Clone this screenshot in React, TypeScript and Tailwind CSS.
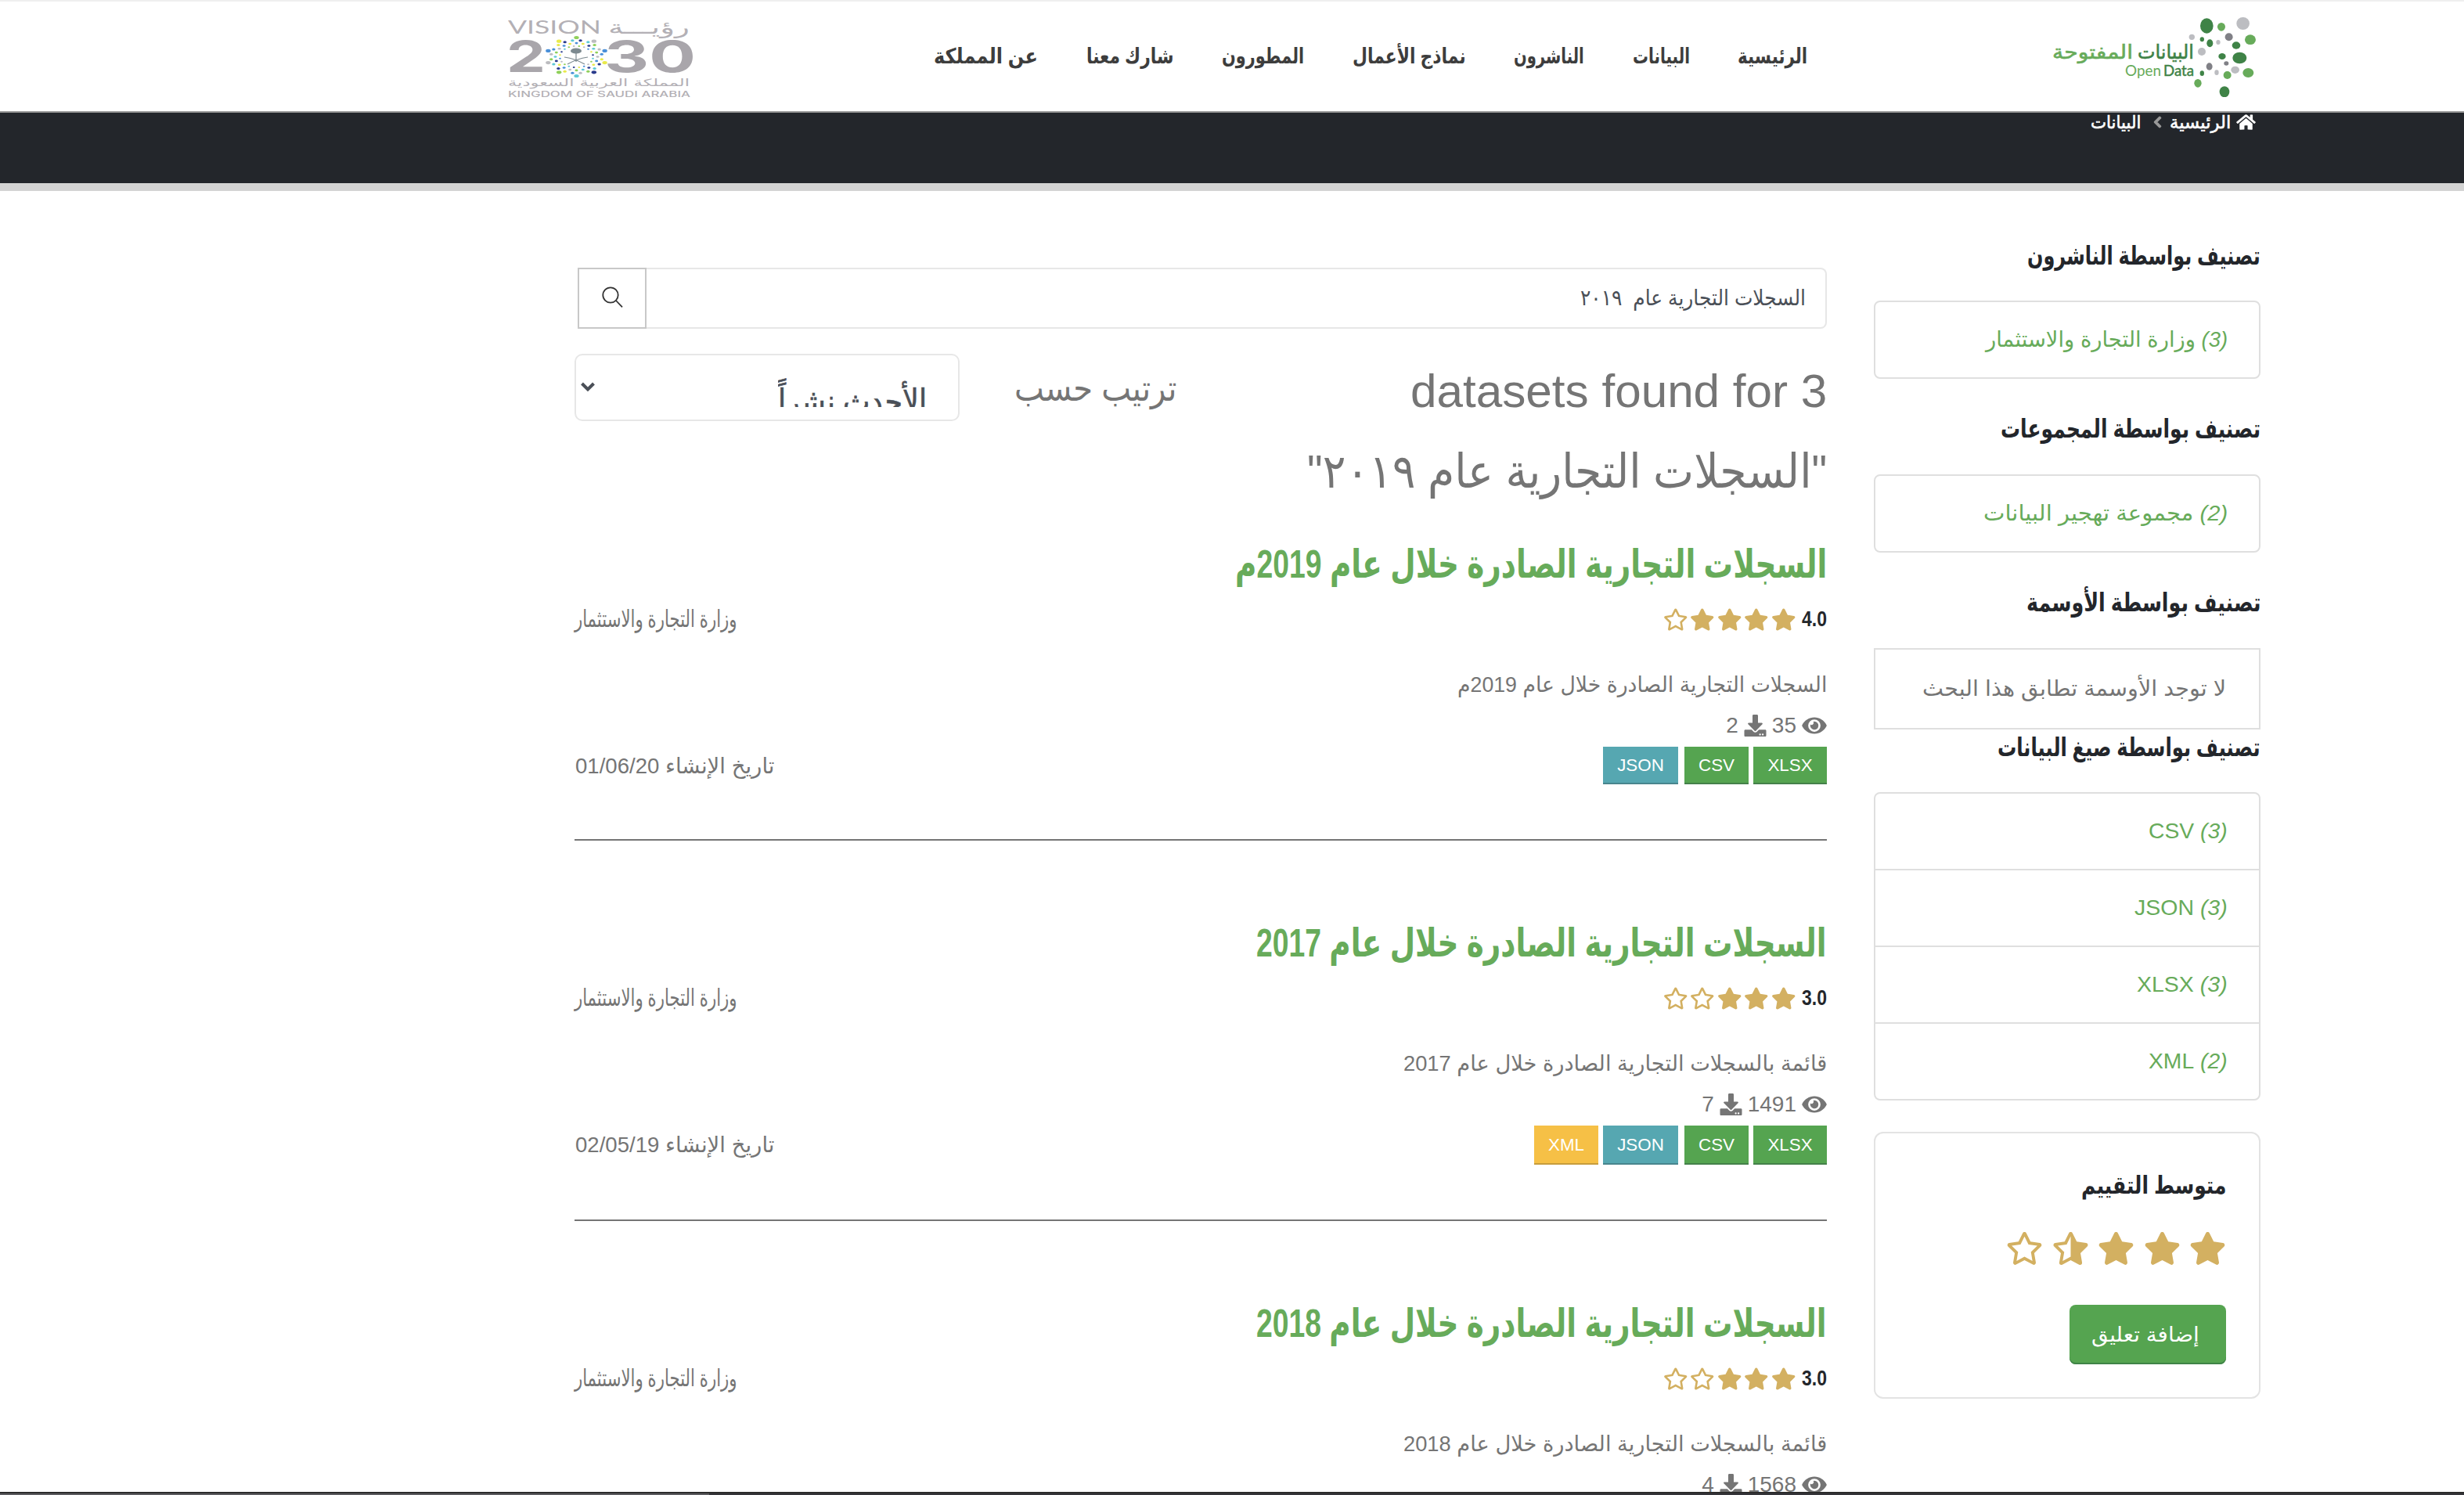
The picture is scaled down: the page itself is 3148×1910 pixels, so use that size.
import { useLayoutEffect, useRef, type ReactNode } from "react";
import {
  FaChevronLeft,
  FaDownload,
  FaEye,
  FaHome,
  FaRegStar,
  FaStar,
  FaStarHalfAlt,
} from "react-icons/fa";

/** Keeps a line of text exactly as wide as its box by condensing or widening it. */
function Fit({ className, children }: { className: string; children: ReactNode }) {
  const outer = useRef<HTMLSpanElement>(null);
  const inner = useRef<HTMLSpanElement>(null);
  useLayoutEffect(() => {
    if (outer.current && inner.current) {
      const ratio = outer.current.clientWidth / inner.current.offsetWidth;
      inner.current.style.transform = `scaleX(${ratio})`;
    }
  });
  return (
    <span ref={outer} className={`block shrink-0 whitespace-nowrap ${className}`}>
      <span ref={inner} className="inline-block origin-right">
        {children}
      </span>
    </span>
  );
}

const D = "#3f8347";
const L = "#67ab5a";
const G = "#bcbdc1";
const K = "#808086";
const logoDots: [number, number, number, number, string][] = [
  [718, 99, 25, 29, D], [774, 103, 15, 16, L], [857, 90, 25, 24, G], [661, 142, 11, 11, G],
  [700, 151, 8, 9, D], [730, 166, 12, 15, D], [762, 162, 8, 9, G], [803, 142, 15, 15, K],
  [885, 152, 21, 19, L], [831, 174, 16, 14, D], [699, 198, 15, 15, G], [777, 216, 14, 12, D],
  [844, 222, 27, 22, D], [793, 243, 9, 8, K], [728, 255, 12, 14, K], [827, 268, 16, 14, G],
  [756, 278, 8, 10, G], [797, 288, 15, 15, L], [877, 279, 21, 18, L], [700, 281, 8, 10, D],
  [684, 319, 14, 16, L], [786, 352, 19, 21, D],
];

function OpenDataLogo() {
  return (
    <svg className="h-[102px] w-[260px] shrink-0" viewBox="0 0 260 102" direction="ltr">
      <g transform="translate(-42 -22) scale(0.3333)">
        {logoDots.map(([x, y, rx, ry, fill], i) => (
          <ellipse key={i} cx={x} cy={y} rx={rx} ry={ry} fill={fill} />
        ))}
      </g>
      <g fontFamily="'DejaVu Sans'" fontSize="25" strokeWidth="0.6">
        <text x="0" y="53" textLength="103" lengthAdjust="spacingAndGlyphs" fill={L} stroke={L}>المفتوحة</text>
        <text x="109" y="53" textLength="72" lengthAdjust="spacingAndGlyphs" fill={D} stroke={D}>البيانات</text>
      </g>
      <g fontFamily="Lato" fontSize="19">
        <text x="93" y="75" textLength="46" lengthAdjust="spacingAndGlyphs" fill={L}>Open</text>
        <text x="142" y="75" textLength="39" lengthAdjust="spacingAndGlyphs" fill={D} stroke={D} strokeWidth="0.5">Data</text>
      </g>
    </svg>
  );
}

const emblemColors = ["#8fd05a", "#5fc9d6", "#2a3b8c", "#e9ea4a", "#4a90d9", "#bcbcc0"];
const emblemRings = [
  { n: 10, r: 1, offset: 0, w: 3.2, h: 2.1 },
  { n: 20, r: 0.86, offset: 9, w: 2.2, h: 1.5 },
  { n: 20, r: 0.71, offset: 0, w: 2, h: 1.3 },
  { n: 20, r: 0.56, offset: 9, w: 1.4, h: 1 },
];

function VisionLogo() {
  return (
    <svg className="h-[104px] w-[238px] shrink-0" viewBox="0 0 238 104" direction="ltr" fill="#b3b0b5">
      <text x="0" y="20.5" fontFamily="Lato" fontSize="23" textLength="119" lengthAdjust="spacingAndGlyphs">VISION</text>
      <text x="128" y="20.5" fontFamily="'DejaVu Sans'" fontSize="24" textLength="104" lengthAdjust="spacingAndGlyphs">رؤيـــة</text>
      <g fill="#a9a6ab" fontFamily="Inter" fontWeight="700" fontSize="55">
        <text x="-2" y="70" textLength="50" lengthAdjust="spacingAndGlyphs">2</text>
        <text x="123" y="70" textLength="117" lengthAdjust="spacingAndGlyphs">30</text>
      </g>
      {emblemRings.map((ring, k) =>
        Array.from({ length: ring.n }, (_, i) => {
          const a = ((i * 360) / ring.n + ring.offset) * (Math.PI / 180);
          return (
            <ellipse
              key={`${k}-${i}`}
              cx={87.5 + Math.sin(a) * 38 * ring.r}
              cy={50.5 - Math.cos(a) * 24.5 * ring.r}
              rx={ring.w}
              ry={ring.h}
              fill={emblemColors[(i * 5 + k * 2) % 6]}
            />
          );
        }),
      )}
      <ellipse cx="87" cy="43" rx="7" ry="3.6" fill="#7d8a90" />
      <path d="M87 45v12M72 51q14 2 26 9M102 51q-14 2-26 9" fill="none" stroke="#7d8a90" strokeWidth="1.2" />
      <text x="0" y="88" fontFamily="'DejaVu Sans'" fontSize="13" textLength="232" lengthAdjust="spacingAndGlyphs">المملكة العربية السعودية</text>
      <text x="0" y="101.5" fontFamily="Inter" fontWeight="500" fontSize="10.5" textLength="233" lengthAdjust="spacingAndGlyphs">KINGDOM OF SAUDI ARABIA</text>
    </svg>
  );
}

function Header() {
  return (
    <header className="flex h-[144px] shrink-0 items-start border-t-2 border-b-2 border-t-[#efefef] border-b-[#999999] pr-[266px]">
      <div className="pt-5">
        <OpenDataLogo />
      </div>
      <nav className="mr-[313px] flex gap-[61.5px] pt-[50px] text-[27px] leading-[40px] font-bold text-[#3d3d3d]">
        <Fit className="w-[89px]">الرئيسية</Fit>
        <Fit className="w-[73px]">البيانات</Fit>
        <Fit className="w-[90px]">الناشرون</Fit>
        <Fit className="w-[145px]">نماذج الأعمال</Fit>
        <Fit className="w-[105px]">المطورون</Fit>
        <Fit className="w-[112px]">شارك معنا</Fit>
        <Fit className="w-[133px]">عن المملكة</Fit>
      </nav>
      <div className="mr-[306px] pt-5">
        <VisionLogo />
      </div>
    </header>
  );
}

function Breadcrumb() {
  return (
    <div className="h-[100px] shrink-0 border-b-[10px] border-[#d3d3d3] bg-[#23262b] pr-[266px] text-white">
      <div className="flex h-6 items-center text-[23px] leading-[24px] [-webkit-text-stroke:0.6px_white]">
        <FaHome className="w-[25px] text-[22px]" />
        <Fit className="mr-[7px] w-[78px]">الرئيسية</Fit>
        <FaChevronLeft className="mr-[9px] w-[13px] stroke-[#999999] stroke-[40] text-[16px] text-[#999999]" />
        <Fit className="mr-[15px] w-[64px]">البيانات</Fit>
      </div>
    </div>
  );
}

function FacetTitle({ className, children }: { className: string; children: ReactNode }) {
  return (
    <h2 className="flex h-10 text-[33px] leading-[38px] font-bold text-[#23262b]">
      <Fit className={className}>{children}</Fit>
    </h2>
  );
}

function Facet({ count, name, className }: { count: number; name: string; className: string }) {
  return (
    <a className="box-content flex h-24 items-center pr-10 leading-[40px] text-[#67ab5a]">
      <Fit className={className}>
        <i>({count})</i> {name}
      </Fit>
    </a>
  );
}

function Sidebar() {
  return (
    <aside className="w-[494px] shrink-0 pt-16 text-[28px]">
      <FacetTitle className="w-[298px]">تصنيف بواسطة الناشرون</FacetTitle>
      <div className="mt-9 rounded-lg border-2 border-[#dfdfdf]">
        <Facet count={3} name="وزارة التجارة والاستثمار" className="w-[309px]" />
      </div>
      <div className="h-[45px]" />
      <FacetTitle className="w-[332px]">تصنيف بواسطة المجموعات</FacetTitle>
      <div className="mt-[37px] rounded-lg border-2 border-[#dfdfdf]">
        <Facet count={2} name="مجموعة تهجير البيانات" className="w-[312px]" />
      </div>
      <div className="h-[45px]" />
      <FacetTitle className="w-[299px]">تصنيف بواسطة الأوسمة</FacetTitle>
      <p className="mt-[37px] flex h-[104px] items-center border-2 border-[#dfdfdf] pr-[42px] leading-[40px] text-[#757575]">
        <Fit className="w-[388px]">لا توجد الأوسمة تطابق هذا البحث</Fit>
      </p>
      <div className="h-1" />
      <FacetTitle className="w-[336px]">تصنيف بواسطة صيغ البيانات</FacetTitle>
      <div className="mt-9 divide-y-2 divide-[#dfdfdf] rounded-lg border-2 border-[#dfdfdf]">
        <Facet count={3} name="CSV" className="w-[101px]" />
        <Facet count={3} name="JSON" className="w-[119px]" />
        <Facet count={3} name="XLSX" className="w-[116px]" />
        <Facet count={2} name="XML" className="w-[101px]" />
      </div>
      <section className="mt-10 flex h-[341px] flex-col items-start rounded-xl border-2 border-[#e3e3e3] pt-[47px] pr-[42px]">
        <h2 className="text-[31px] leading-[40px] font-bold text-[#23262b]">
          <Fit className="w-[185px]">متوسط التقييم</Fit>
        </h2>
        <div className="mt-[39px] flex gap-[11.5px] text-[42px] text-[#d3b061]">
          <FaStar className="w-[47px]" />
          <FaStar className="w-[47px]" />
          <FaStar className="w-[47px]" />
          <FaStarHalfAlt className="w-[47px] -scale-x-100" />
          <FaRegStar className="w-[47px]" />
        </div>
        <button className="mt-[51px] flex h-[76px] w-[200px] items-center rounded-lg bg-[#55a450] pr-[30px] text-[26px] leading-[40px] text-white shadow-[inset_0_-2px_0_#3f8347]">
          <Fit className="w-[138px]">إضافة تعليق</Fit>
        </button>
      </section>
    </aside>
  );
}

type Dataset = {
  title: string;
  titleWidth: string;
  text: string;
  textWidth: string;
  rating: string;
  stars: number;
  views: number;
  downloads: number;
  date: string;
  formats: string[];
  badgeHeight: string;
};

const badgeStyles: Record<string, string> = {
  XLSX: "ml-[6px] w-[94px] bg-[#55a450] shadow-[inset_0_-2px_0_#45814a]",
  CSV: "ml-2 w-[82px] bg-[#55a450] shadow-[inset_0_-2px_0_#45814a]",
  JSON: "ml-[6px] w-[96px] bg-[#56a7b1] shadow-[inset_0_-2px_0_#48858d]",
  XML: "w-[82px] bg-[#f6c046] shadow-[inset_0_-2px_0_#c79d3d]",
};

const datasets: Dataset[] = [
  {
    title: "السجلات التجارية الصادرة خلال عام 2019م",
    titleWidth: "w-[756px]",
    text: "السجلات التجارية الصادرة خلال عام 2019م",
    textWidth: "w-[472px]",
    rating: "4.0",
    stars: 4,
    views: 35,
    downloads: 2,
    date: "01/06/20",
    formats: ["XLSX", "CSV", "JSON"],
    badgeHeight: "h-[48px]",
  },
  {
    title: "السجلات التجارية الصادرة خلال عام 2017",
    titleWidth: "w-[729px]",
    text: "قائمة بالسجلات التجارية الصادرة خلال عام 2017",
    textWidth: "w-[541px]",
    rating: "3.0",
    stars: 3,
    views: 1491,
    downloads: 7,
    date: "02/05/19",
    formats: ["XLSX", "CSV", "JSON", "XML"],
    badgeHeight: "h-[50px]",
  },
  {
    title: "السجلات التجارية الصادرة خلال عام 2018",
    titleWidth: "w-[729px]",
    text: "قائمة بالسجلات التجارية الصادرة خلال عام 2018",
    textWidth: "w-[541px]",
    rating: "3.0",
    stars: 3,
    views: 1568,
    downloads: 4,
    date: "02/05/19",
    formats: ["XLSX", "CSV", "JSON", "XML"],
    badgeHeight: "h-[50px]",
  },
];

function DatasetCard({ item }: { item: Dataset }) {
  return (
    <article className="mb-24 text-[28px] leading-[40px] text-[#757575]">
      <h3 className="flex h-[70px] text-[50px] leading-[70px] font-bold text-[#67ab5a]">
        <Fit className={item.titleWidth}>{item.title}</Fit>
      </h3>
      <div className="mt-[15px] flex h-10 items-center">
        <Fit className="w-[32px] font-bold text-[#23262b]">{item.rating}</Fit>
        <div className="mr-[8px] flex gap-[2.9px] text-[29px] text-[#d3b061]">
          {[1, 2, 3, 4, 5].map((n) =>
            n <= item.stars ? (
              <FaStar key={n} className="w-[31.5px]" />
            ) : (
              <FaRegStar key={n} className="w-[31.5px]" />
            ),
          )}
        </div>
        <Fit className="mr-auto w-[208px] text-[30px]">وزارة التجارة والاستثمار</Fit>
      </div>
      <p className="mt-[44px] flex h-10">
        <Fit className={item.textWidth}>{item.text}</Fit>
      </p>
      <div className="mt-3 flex h-10 items-center">
        <FaEye className="w-[32px]" />
        <span className="mr-[7px]">{item.views}</span>
        <FaDownload className="mr-[7px] w-[29px]" />
        <span className="mr-[7px]">{item.downloads}</span>
      </div>
      <div className="mt-[7px] flex">
        {item.formats.map((format) => (
          <span
            key={format}
            className={`flex ${item.badgeHeight} items-center justify-center text-[22.4px] text-white ${badgeStyles[format]}`}
          >
            {format}
          </span>
        ))}
        <Fit className="mt-[5px] mr-auto w-[255px]">تاريخ الإنشاء {item.date}</Fit>
      </div>
      <hr className="mt-[70px] border-t-2 border-[#757575]" />
    </article>
  );
}

function Results() {
  return (
    <main className="mr-[60px] w-[1600px] shrink-0 pt-[98px]">
      <form className="flex h-[78px] w-[1596px]">
        <div className="flex flex-1 items-center rounded-r-lg border-2 border-l-0 border-[#e7e7e7] pr-[25px] text-[28px] leading-[40px] text-[#4a4f57]">
          <Fit className="w-[288px]">السجلات التجارية عام &nbsp;٢٠١٩</Fit>
        </div>
        <button className="flex w-[88px] items-center justify-center border-2 border-[#c8c8c8]">
          <svg className="mb-1 h-[27px] w-[27px]" viewBox="0 0 27 27" fill="none" stroke="#333" strokeWidth="1.8">
            <circle cx="11" cy="11" r="9.7" />
            <path d="M18 18l8 8.3" />
          </svg>
        </button>
      </form>
      <div className="mt-[28px] flex h-[206px] items-start text-[#757575]">
        <h1 className="w-[831px] text-[60px] leading-[103px]">
          <Fit className="w-[532px]">3 datasets found for</Fit>
          <Fit className="w-[664px]">"السجلات التجارية عام ٢٠١٩"</Fit>
        </h1>
        <Fit className="mt-[18px] w-[207px] text-[46px] leading-[60px]">ترتيب حسب</Fit>
        <div className="mt-1 mr-[70px] flex h-[86px] w-[492px] items-start justify-between rounded-[10px] border-2 border-[#e7e7e7] pr-[40px] pl-[5px] text-[#4a4f57]">
          <div className="h-[66px] overflow-hidden text-[43px] leading-[119px] [-webkit-text-stroke:0.7px_#4a4f57]">
            <Fit className="w-[190px]">الأحدث نشراً</Fit>
          </div>
          <svg className="mt-[33px] h-[14px] w-[20px]" viewBox="0 0 20 14" fill="none" stroke="#4a4f57" strokeWidth="4">
            <path d="M2.5 3l7.5 7.5L17.5 3" />
          </svg>
        </div>
      </div>
      <div className="mt-8">
        {datasets.map((item) => (
          <DatasetCard key={item.title} item={item} />
        ))}
      </div>
    </main>
  );
}

export default function App() {
  return (
    <div
      dir="rtl"
      className="flex h-[1910px] w-[3148px] flex-col overflow-hidden bg-white font-['Liberation_Sans','DejaVu_Sans',sans-serif]"
    >
      <Header />
      <Breadcrumb />
      <div className="flex min-h-0 flex-1 items-start overflow-hidden pr-[260px]">
        <Sidebar />
        <Results />
      </div>
      <div className="flex h-1 shrink-0 justify-end border-t-2 border-[#2b2b2b] bg-[#35353a]">
        <div className="h-[2px] w-[906px] bg-[#5c5c60]" />
      </div>
    </div>
  );
}
